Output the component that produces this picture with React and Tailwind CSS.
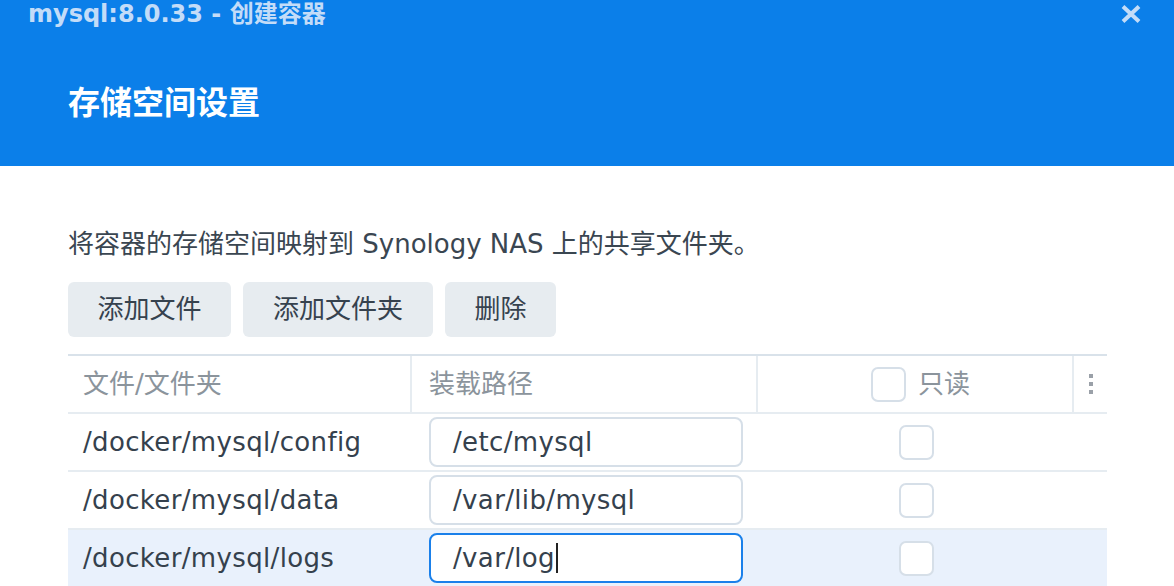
import React from "react";

const FONT = { fontFamily: '"DejaVu Sans", "Noto Sans CJK SC", sans-serif' };

function Checkbox() {
  return <div className="w-[35px] h-[35px] rounded-[7px] border-2 border-[#d6dfe8] bg-white shrink-0" />;
}

function Row({ src, dst, active }) {
  return (
    <div className={`flex h-[58px] border-b-2 border-[#e6ecf1] ${active ? "bg-[#e9f1fc]" : "bg-white"}`}>
      <div className="w-[344px] flex items-center pl-[15px] text-[26px] tracking-[0.35px] text-[#35414d]">{src}</div>
      <div className="w-[346px] flex items-center pl-[17px]">
        <div
          className={`w-[314px] h-[50px] rounded-[8px] border-2 bg-white flex items-center pl-[22px] text-[26px] tracking-[0.35px] text-[#35414d] ${
            active ? "border-[#1a80ea]" : "border-[#d6dfe8]"
          }`}
        >
          {dst}
          {active && <span className="inline-block w-[2px] h-[30px] bg-[#222] ml-[1px]" />}
        </div>
      </div>
      <div className="w-[316px] flex items-center justify-center">
        <Checkbox />
      </div>
      <div className="flex-1" />
    </div>
  );
}

export default function App() {
  return (
    <div className="w-[1174px] h-[586px] overflow-hidden bg-white" style={FONT}>
      <div className="h-[166px] bg-[#0b7fe9] relative">
        <div className="h-[28px] pl-[28px] flex items-center text-[24px] font-bold text-[#c3dcf8] leading-[28px]">
          mysql:8.0.33 - 创建容器
        </div>
        <svg className="absolute left-[1121px] top-[5px]" width="20" height="18" viewBox="0 0 20 18">
          <path d="M2 1.5 L18 16.5 M18 1.5 L2 16.5" stroke="#c3dcf8" strokeWidth="4" strokeLinecap="butt" />
        </svg>
        <div className="pl-[68px] mt-[56px] text-[32px] font-bold text-white leading-[38px]">存储空间设置</div>
      </div>
      <div className="px-[68px]">
        <div className="mt-[63px] text-[26px] leading-[30px] text-[#3a4651]">
          将容器的存储空间映射到 Synology NAS 上的共享文件夹。
        </div>
        <div className="mt-[23px] flex gap-[12px]">
          <button className="w-[163px] h-[55px] rounded-[6px] bg-[#e7ecf0] text-[26px] text-[#36424e]">添加文件</button>
          <button className="w-[190px] h-[55px] rounded-[6px] bg-[#e7ecf0] text-[26px] text-[#36424e]">添加文件夹</button>
          <button className="w-[111px] h-[55px] rounded-[6px] bg-[#e7ecf0] text-[26px] text-[#36424e]">删除</button>
        </div>
        <div className="mt-[17px] w-[1039px] border-t-2 border-[#d9e2ea]">
          <div className="flex h-[58px] border-b-2 border-[#e6ecf1]">
            <div className="w-[344px] flex items-center pl-[15px] text-[26px] text-[#8b949c] border-r-2 border-[#e6ecf1]">
              文件/文件夹
            </div>
            <div className="w-[346px] flex items-center pl-[17px] text-[26px] text-[#8b949c] border-r-2 border-[#e6ecf1]">
              装载路径
            </div>
            <div className="w-[316px] flex items-center justify-center gap-[12px] text-[26px] text-[#8b949c] border-r-2 border-[#e6ecf1] pl-[11px]">
              <Checkbox />
              <span>只读</span>
            </div>
            <div className="flex-1 flex flex-col items-center justify-center gap-[4px]">
              <div className="w-[4px] h-[4px] bg-[#9aa0a8]" />
              <div className="w-[4px] h-[4px] bg-[#9aa0a8]" />
              <div className="w-[4px] h-[4px] bg-[#9aa0a8]" />
            </div>
          </div>
          <Row src="/docker/mysql/config" dst="/etc/mysql" />
          <Row src="/docker/mysql/data" dst="/var/lib/mysql" />
          <Row src="/docker/mysql/logs" dst="/var/log" active />
        </div>
      </div>
    </div>
  );
}
